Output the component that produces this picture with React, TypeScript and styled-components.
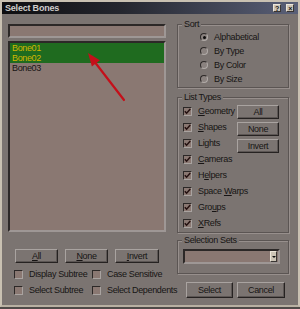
import React from 'react';
import styled, { createGlobalStyle } from 'styled-components';

const GlobalStyle = createGlobalStyle`
  html, body {
    margin: 0;
    padding: 0;
    background: #4f4a48;
  }
  * {
    box-sizing: border-box;
  }
`;

const Window = styled.div`
  width: 300px;
  height: 307px;
  background: #7b7471;
  border: 2px solid #c9c1b2;
  border-bottom-color: #b8b0a2;
  display: flex;
  flex-direction: column;
  font-family: 'Liberation Sans', Arial, sans-serif;
  font-size: 9px;
  letter-spacing: -0.35px;
  color: #171414;
  white-space: nowrap;
`;

const TitleBar = styled.div`
  height: 12px;
  flex: none;
  display: flex;
  align-items: center;
  justify-content: space-between;
  padding: 0 4px 0 3px;
  background: linear-gradient(to right, #0e0e10 0%, #24262e 40%, #5a6078 100%);
`;

const TitleText = styled.span`
  color: #cfcdcb;
  font-weight: bold;
  font-size: 9px;
  letter-spacing: -0.2px;
`;

const CaptionButtons = styled.div`
  display: flex;
  gap: 5px;
`;

const CaptionButton = styled.div`
  width: 8px;
  height: 8px;
  background: #cdc5b6;
  border: 1px solid;
  border-color: #ece6da #3a3634 #3a3634 #ece6da;
  display: flex;
  align-items: center;
  justify-content: center;
  font-size: 7px;
  font-weight: bold;
  line-height: 1;
  color: #111;
`;

const Body = styled.div`
  flex: 1;
  display: grid;
  grid-template-columns: 158px 112px;
  column-gap: 11px;
  padding: 5px 9px 0 6px;
`;

const LeftColumn = styled.div`
  display: flex;
  flex-direction: column;
  padding-top: 5px;
  min-width: 0;
`;

const Sunken = styled.div`
  background: #8a7872;
  border: 2px solid;
  border-color: #2c2827 #9e9795 #9e9795 #2c2827;
`;

const SearchField = styled(Sunken)`
  height: 14px;
`;

const BoneList = styled(Sunken)`
  position: relative;
  height: 191px;
  margin-top: 3px;
`;

const BoneRow = styled.div<{ $selected?: boolean }>`
  height: 10px;
  line-height: 10px;
  padding-left: 2px;
  background: ${p => (p.$selected ? '#1f6b1f' : 'transparent')};
  color: ${p => (p.$selected ? '#d0b600' : '#171414')};
`;

const Arrow = styled.svg`
  position: absolute;
  left: 76px;
  top: 8px;
`;

const ButtonRow = styled.div`
  display: flex;
  gap: 7px;
  padding-left: 7px;
  margin-top: 17px;
`;

const Button = styled.div<{ $w?: number; $h?: number }>`
  width: ${p => p.$w ?? 43}px;
  height: ${p => p.$h ?? 14}px;
  display: flex;
  align-items: center;
  justify-content: center;
  background: #7b7471;
  border: 1px solid;
  border-color: #a9a3a0 #262221 #262221 #a9a3a0;
  box-shadow: inset -1px -1px 0 #5c5654;
`;

const OptionGrid = styled.div`
  display: grid;
  grid-template-columns: 78px 80px;
  grid-auto-rows: 16px;
  padding-left: 6px;
  margin-top: 3px;
`;

const CheckRow = styled.label`
  display: flex;
  align-items: center;
  gap: 6px;
`;

const Box = styled.span`
  width: 9px;
  height: 9px;
  flex: none;
  display: flex;
  align-items: center;
  justify-content: center;
  background: #8a7872;
  border: 1px solid;
  border-color: #2c2827 #a9a3a0 #a9a3a0 #2c2827;
`;

const RightColumn = styled.div`
  display: flex;
  flex-direction: column;
  min-width: 0;
`;

const Group = styled.fieldset<{ $h: number; $mt?: number }>`
  height: ${p => p.$h}px;
  margin: ${p => p.$mt ?? 0}px 0 0 0;
  padding: 0;
  min-width: 0;
  border: 1px solid #5b5553;
  box-shadow: inset 1px 1px 0 #978f8c, 1px 1px 0 #978f8c;
`;

const Legend = styled.legend`
  margin-left: 4px;
  padding: 0 2px;
  line-height: 10px;
  height: 10px;
  background: #7b7471;
`;

const RadioList = styled.div`
  padding: 1px 0 0 22px;
`;

const RadioRow = styled.div`
  height: 14px;
  display: flex;
  align-items: center;
  gap: 6px;
`;

const Radio = styled.span<{ $on?: boolean }>`
  width: 8px;
  height: 8px;
  border-radius: 50%;
  border: 1px solid;
  border-color: #2c2827 #b0aaa7 #b0aaa7 #2c2827;
  background: #8a827f;
  display: flex;
  align-items: center;
  justify-content: center;
  &::after {
    content: '';
    width: 3px;
    height: 3px;
    border-radius: 50%;
    background: ${p => (p.$on ? '#0c0a0a' : 'transparent')};
  }
`;

const TypesBody = styled.div`
  display: flex;
  padding: 1px 9px 0 5px;
`;

const TypeChecks = styled.div`
  flex: 1;
  min-width: 0;
  display: flex;
  flex-direction: column;
`;

const TypeRow = styled(CheckRow)`
  height: 16px;
`;

const TypeButtons = styled.div`
  display: flex;
  flex-direction: column;
  gap: 3px;
  padding-top: 2px;
`;

const Dropdown = styled(Sunken)`
  height: 15px;
  margin: 4px 8px 0 5px;
  display: flex;
  justify-content: flex-end;
  padding: 0 1px 0 0;
`;

const DropButton = styled.span`
  width: 7px;
  background: #cdc5b6;
  border: 1px solid;
  border-color: #ece6da #3a3634 #3a3634 #ece6da;
  display: flex;
  align-items: center;
  justify-content: center;
  &::after {
    content: '';
    border-left: 2px solid transparent;
    border-right: 2px solid transparent;
    border-top: 2px solid #111;
  }
`;

const DialogButtons = styled.div`
  display: flex;
  gap: 4px;
  padding-left: 9px;
  margin-top: 8px;
`;

const Check = () => (
  <svg width="7" height="7" viewBox="0 0 7 7">
    <path d="M0.8 3.2 L2.6 5.2 L6.3 1" fill="none" stroke="#241010" strokeWidth="1.5" />
  </svg>
);

const types: React.ReactNode[] = [
  <><u>G</u>eometry</>,
  <><u>S</u>hapes</>,
  <>Li<u>g</u>hts</>,
  <><u>C</u>ameras</>,
  <>H<u>e</u>lpers</>,
  <>Space <u>W</u>arps</>,
  <>Gro<u>u</u>ps</>,
  <><u>X</u>Refs</>,
];

const bones = [
  { name: 'Bone01', selected: true },
  { name: 'Bone02', selected: true },
  { name: 'Bone03', selected: false },
];

export default function App() {
  return (
    <>
      <GlobalStyle />
      <Window>
        <TitleBar>
          <TitleText>Select Bones</TitleText>
          <CaptionButtons>
            <CaptionButton>?</CaptionButton>
            <CaptionButton>×</CaptionButton>
          </CaptionButtons>
        </TitleBar>
        <Body>
          <LeftColumn>
            <SearchField />
            <BoneList>
              {bones.map(b => (
                <BoneRow key={b.name} $selected={b.selected}>{b.name}</BoneRow>
              ))}
              <Arrow width="42" height="52" viewBox="0 0 42 52">
                <line x1="8" y1="10" x2="38" y2="49" stroke="#c4101a" strokeWidth="2.2" strokeLinecap="round" />
                <polygon points="2,2 5.9,15.4 13.9,9.3" fill="#c4101a" />
              </Arrow>
            </BoneList>
            <ButtonRow>
              <Button><span><u>A</u>ll</span></Button>
              <Button><span><u>N</u>one</span></Button>
              <Button $w={44}><span><u>I</u>nvert</span></Button>
            </ButtonRow>
            <OptionGrid>
              <CheckRow><Box /><span>Display Subtree</span></CheckRow>
              <CheckRow><Box /><span>Case Sensitive</span></CheckRow>
              <CheckRow><Box /><span>Select Subtree</span></CheckRow>
              <CheckRow><Box /><span>Select Dependents</span></CheckRow>
            </OptionGrid>
          </LeftColumn>
          <RightColumn>
            <Group $h={69}>
              <Legend>Sort</Legend>
              <RadioList>
                <RadioRow><Radio $on /><span>Alphabetical</span></RadioRow>
                <RadioRow><Radio /><span>By Type</span></RadioRow>
                <RadioRow><Radio /><span>By Color</span></RadioRow>
                <RadioRow><Radio /><span>By Size</span></RadioRow>
              </RadioList>
            </Group>
            <Group $h={141} $mt={4}>
              <Legend>List Types</Legend>
              <TypesBody>
                <TypeChecks>
                  {types.map((t, i) => (
                    <TypeRow key={i}><Box><Check /></Box><span>{t}</span></TypeRow>
                  ))}
                </TypeChecks>
                <TypeButtons>
                  <Button $w={42}>All</Button>
                  <Button $w={42}>None</Button>
                  <Button $w={42}>Invert</Button>
                </TypeButtons>
              </TypesBody>
            </Group>
            <Group $h={39} $mt={2}>
              <Legend>Selection Sets</Legend>
              <Dropdown><DropButton /></Dropdown>
            </Group>
            <DialogButtons>
              <Button $w={47} $h={16}>Select</Button>
              <Button $w={48} $h={16}>Cancel</Button>
            </DialogButtons>
          </RightColumn>
        </Body>
      </Window>
    </>
  );
}
